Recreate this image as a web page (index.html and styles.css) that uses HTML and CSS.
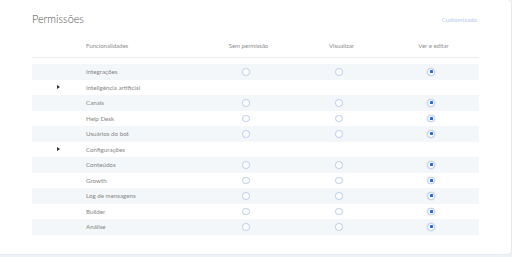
FILE: index.html
```html
<!DOCTYPE html>
<html lang="pt">
<head>
<meta charset="utf-8">
<title>Permissões</title>
<link rel="stylesheet" href="styles.css">
</head>
<body>
<div class="card">
  <div class="top">
    <h1 class="title">Permissões</h1>
    <span class="custom">Customizado</span>
  </div>
  <div class="thead">
    <span></span>
    <span class="th-label">Funcionalidades</span>
    <span class="th">Sem permissão</span>
    <span class="th">Visualizar</span>
    <span class="th">Ver e editar</span>
  </div>
  <div class="tbody">
    <div class="row shade"><span></span><span class="label">Integrações</span><span class="cell"><i class="radio"></i></span><span class="cell"><i class="radio"></i></span><span class="cell"><i class="radio on"></i></span></div>
    <div class="row"><span class="exp"><i class="tri"></i></span><span class="label">Inteligência artificial</span><span></span><span></span><span></span></div>
    <div class="row shade"><span></span><span class="label">Canais</span><span class="cell"><i class="radio"></i></span><span class="cell"><i class="radio"></i></span><span class="cell"><i class="radio on"></i></span></div>
    <div class="row"><span></span><span class="label">Help Desk</span><span class="cell"><i class="radio"></i></span><span class="cell"><i class="radio"></i></span><span class="cell"><i class="radio on"></i></span></div>
    <div class="row shade"><span></span><span class="label">Usuários do bot</span><span class="cell"><i class="radio"></i></span><span class="cell"><i class="radio"></i></span><span class="cell"><i class="radio on"></i></span></div>
    <div class="row"><span class="exp"><i class="tri"></i></span><span class="label">Configurações</span><span></span><span></span><span></span></div>
    <div class="row shade"><span></span><span class="label">Conteúdos</span><span class="cell"><i class="radio"></i></span><span class="cell"><i class="radio"></i></span><span class="cell"><i class="radio on"></i></span></div>
    <div class="row"><span></span><span class="label">Growth</span><span class="cell"><i class="radio"></i></span><span class="cell"><i class="radio"></i></span><span class="cell"><i class="radio on"></i></span></div>
    <div class="row shade"><span></span><span class="label">Log de mensagens</span><span class="cell"><i class="radio"></i></span><span class="cell"><i class="radio"></i></span><span class="cell"><i class="radio on"></i></span></div>
    <div class="row"><span></span><span class="label">Builder</span><span class="cell"><i class="radio"></i></span><span class="cell"><i class="radio"></i></span><span class="cell"><i class="radio on"></i></span></div>
    <div class="row shade"><span></span><span class="label">Análise</span><span class="cell"><i class="radio"></i></span><span class="cell"><i class="radio"></i></span><span class="cell"><i class="radio on"></i></span></div>
  </div>
</div>
</body>
</html>
```
FILE: styles.css
```css
html, body {
  margin: 0;
  padding: 0;
}
body {
  background: #eef2f6;
  font-family: Lato, "Open Sans", sans-serif;
  width: 512px;
  height: 257px;
  overflow: hidden;
}
.card {
  box-sizing: border-box;
  width: 513px;
  height: 256px;
  margin-left: -1px;
  margin-top: -1px;
  background: #ffffff;
  border: 1px solid #e6eaee;
  border-radius: 0 5px 5px 0;
  padding: 0 32px 0 32px;
}
.top {
  height: 36px;
  display: flex;
  justify-content: space-between;
  align-items: flex-start;
}
.title {
  margin: 12px 0 0 0;
  font-size: 10.8px;
  line-height: 14px;
  font-weight: 300;
  color: #4e4e4e;
}
.custom {
  margin: 16px 2px 0 0;
  font-size: 6.2px;
  line-height: 8px;
  color: #b3cbee;
}
.thead, .row {
  display: grid;
  grid-template-columns: 54px 116px 93px 93px 91px;
  align-items: center;
}
.thead {
  height: 19px;
  padding-bottom: 2px;
  border-bottom: 1px solid #e9edf0;
  font-size: 6px;
  color: #8c8c8c;
}
.th {
  text-align: center;
}
.tbody {
  padding-top: 6px;
}
.row {
  height: 15.5px;
  font-size: 6.2px;
  color: #858585;
}
.shade {
  background: #f4f7f9;
}
.cell {
  display: flex;
  justify-content: center;
  padding-right: 5px;
}
.radio {
  box-sizing: border-box;
  width: 7.5px;
  height: 7.5px;
  border: 1px solid #b8c9ee;
  border-radius: 50%;
  background: #fff;
  display: flex;
  align-items: center;
  justify-content: center;
}
.radio.on {
  border-color: #bccbea;
  box-shadow: 0 0 0 0.6px rgba(40, 100, 220, 0.12);
}
.radio.on::after {
  content: "";
  width: 3px;
  height: 3px;
  border-radius: 0.6px;
  background: #1e6ee6;
}
.exp {
  display: flex;
  padding-left: 25px;
}
.tri {
  width: 0;
  height: 0;
  border-top: 2px solid transparent;
  border-bottom: 2px solid transparent;
  border-left: 3px solid #2a2f36;
}
```
